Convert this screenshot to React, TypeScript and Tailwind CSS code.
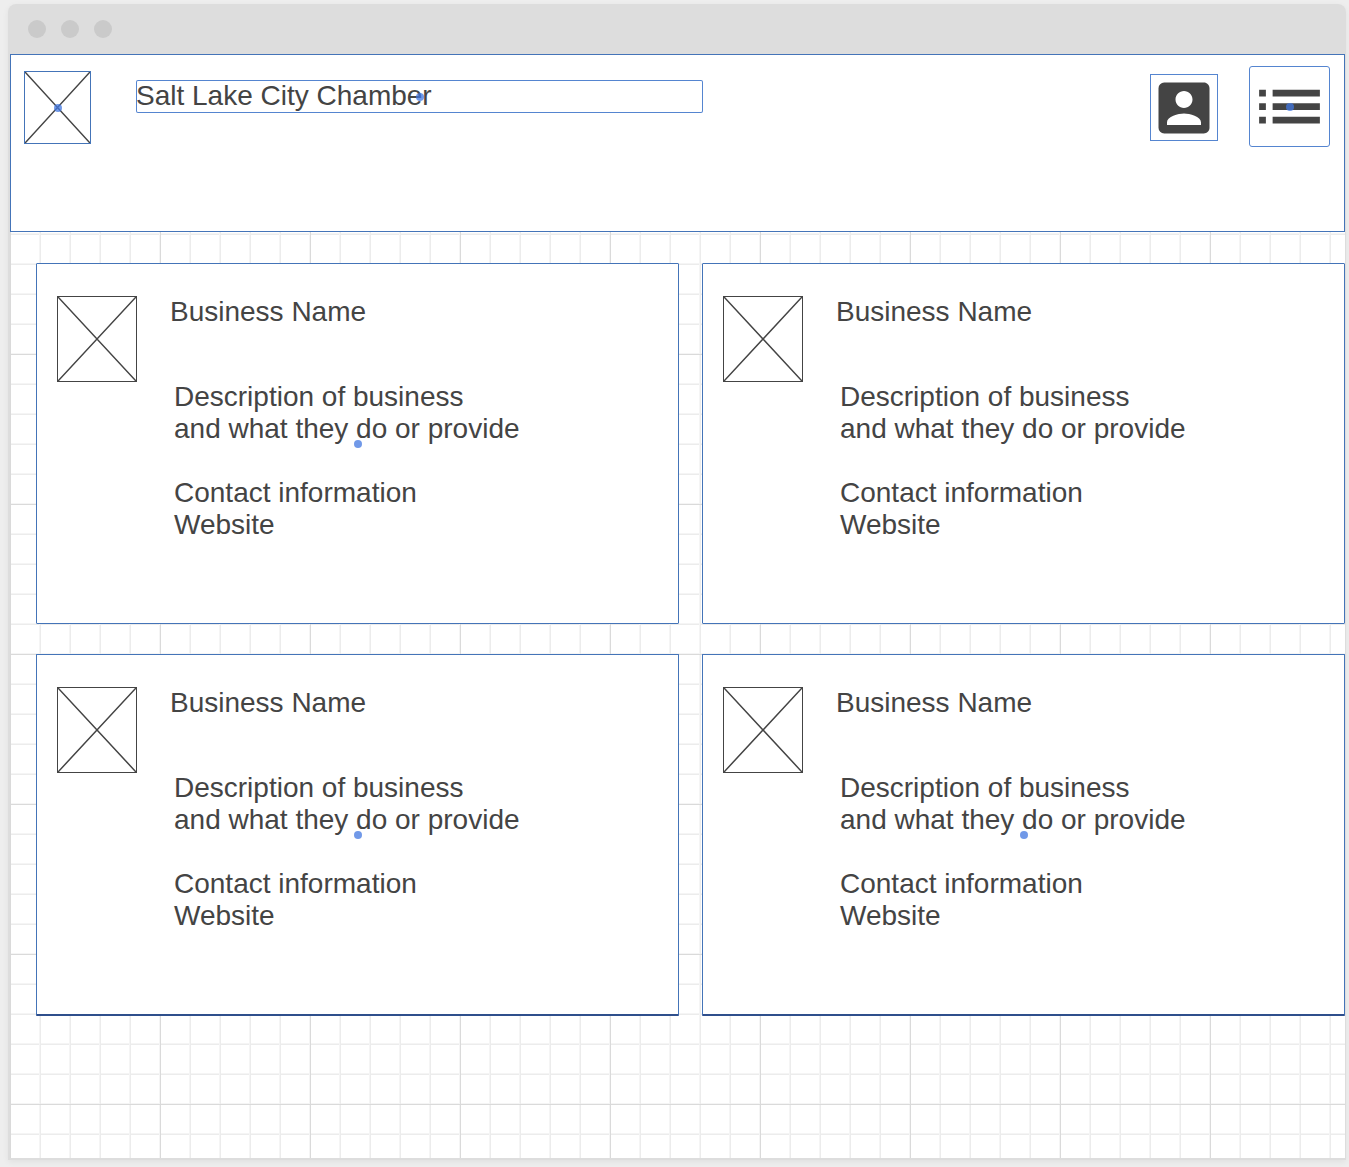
import React from "react";

function Handle({ className = "" }: { className?: string }) {
  return (
    <span
      aria-hidden="true"
      className={`absolute size-2 -translate-x-1/2 -translate-y-1/2 rounded-full bg-[#4277e0]/75 ${className}`}
    />
  );
}

function ImagePlaceholder() {
  return (
    <svg
      role="img"
      aria-label="Image placeholder"
      viewBox="0 0 100 100"
      preserveAspectRatio="none"
      className="block size-full stroke-[#444444]"
    >
      <path d="M0 0 100 100M100 0 0 100" strokeWidth="1.5" vectorEffect="non-scaling-stroke" />
    </svg>
  );
}

function TitleBar() {
  return (
    <div className="flex h-[50px] items-center gap-[15px] rounded-t-lg bg-[#dddddd] pl-5">
      <span className="size-[18px] rounded-full bg-[#cacaca]" />
      <span className="size-[18px] rounded-full bg-[#cacaca]" />
      <span className="size-[18px] rounded-full bg-[#cacaca]" />
    </div>
  );
}

function Header() {
  return (
    <header className="flex h-[178px] items-start border border-[#4474b8] bg-white pr-3.5 pl-[13px]">
      <div className="relative mt-4 h-[73px] w-[67px] shrink-0 border border-[#4474b8]">
        <ImagePlaceholder />
        <Handle className="top-1/2 left-1/2" />
      </div>
      <h1 className="relative mt-[25px] ml-[45px] h-[33px] max-w-[567px] flex-1 rounded-xs text-[28px] leading-8 whitespace-nowrap ring-1 ring-[#5585d0] ring-inset">
        Salt Lake City Chamber
        <Handle className="top-1/2 left-1/2" />
      </h1>
      <nav className="ml-auto flex shrink-0 items-start gap-[31px]">
        <button
          type="button"
          aria-label="Account"
          className="mt-[19px] flex h-[67px] w-[68px] items-center justify-center border border-[#5585d0]"
        >
          <svg viewBox="0 0 24 24" className="size-[68px] shrink-0 fill-[#444444]">
            <path d="M3 5v14a2 2 0 0 0 2 2h14c1.1 0 2-.9 2-2V5c0-1.1-.9-2-2-2H5a2 2 0 0 0-2 2zm12 4c0 1.66-1.34 3-3 3s-3-1.34-3-3 1.34-3 3-3 3 1.34 3 3zm-9 8c0-2 4-3.1 6-3.1s6 1.1 6 3.1v1H6v-1z" />
          </svg>
        </button>
        <button
          type="button"
          aria-label="Menu"
          className="relative mt-[11px] flex size-[81px] items-center justify-center rounded-[3px] border border-[#5585d0]"
        >
          <svg viewBox="0 0 24 24" className="size-[81px] shrink-0 fill-[#444444]">
            <path d="M3 13h2v-2H3v2zm0 4h2v-2H3v2zm0-8h2V7H3v2zm4 4h14v-2H7v2zm0 4h14v-2H7v2zM7 7v2h14V7H7z" />
          </svg>
          <Handle className="top-1/2 left-1/2" />
        </button>
      </nav>
    </header>
  );
}

function BusinessCard({ handle, last }: { handle: boolean; last: boolean }) {
  return (
    <article
      className={`relative flex items-start rounded-[1px] border border-[#4474b8] bg-white pt-8 pl-5 ${
        last ? "h-[362px] border-b-2 border-b-[#2f4f8c]" : "h-[361px]"
      }`}
    >
      <div className="h-[86px] w-20 shrink-0 border border-[#444444]">
        <ImagePlaceholder />
      </div>
      <div className="ml-[33px] text-[28px] leading-8">
        <h2>Business Name</h2>
        <div className="mt-[53px] ml-1">
          <p>
            Description of business
            <br />
            and what they do or provide
          </p>
          <p className="mt-8">
            Contact information
            <br />
            Website
          </p>
        </div>
      </div>
      {handle && <Handle className="top-1/2 left-1/2" />}
    </article>
  );
}

const cards = [
  { id: 1, handle: true, last: false },
  { id: 2, handle: false, last: false },
  { id: 3, handle: true, last: true },
  { id: 4, handle: true, last: true },
];

export default function App() {
  return (
    <div className="min-h-screen bg-[#eeeeee] pt-1 pr-[3px] pb-[7px] pl-2 font-['Liberation_Sans',Arial,sans-serif] text-[#444444]">
      <div className="rounded-t-lg shadow-[0_2px_6px_rgba(0,0,0,0.06)]">
        <TitleBar />
        <main className="border-r border-b-2 border-l-2 border-[#dddddd] bg-white bg-[linear-gradient(to_right,#dadada_1px,transparent_1px),linear-gradient(to_bottom,#dadada_1px,transparent_1px),linear-gradient(to_right,#ececec_1px,transparent_1px,transparent_29px,#f5f5f5_29px),linear-gradient(to_bottom,#ececec_1px,transparent_1px,transparent_29px,#f5f5f5_29px)] bg-[size:150px_150px,150px_150px,30px_30px,30px_30px] pb-[142px]">
          <Header />
          <div className="mt-[31px] grid grid-cols-2 gap-x-[23px] gap-y-[30px] pl-[26px]">
            {cards.map((card) => (
              <BusinessCard key={card.id} handle={card.handle} last={card.last} />
            ))}
          </div>
        </main>
      </div>
    </div>
  );
}
